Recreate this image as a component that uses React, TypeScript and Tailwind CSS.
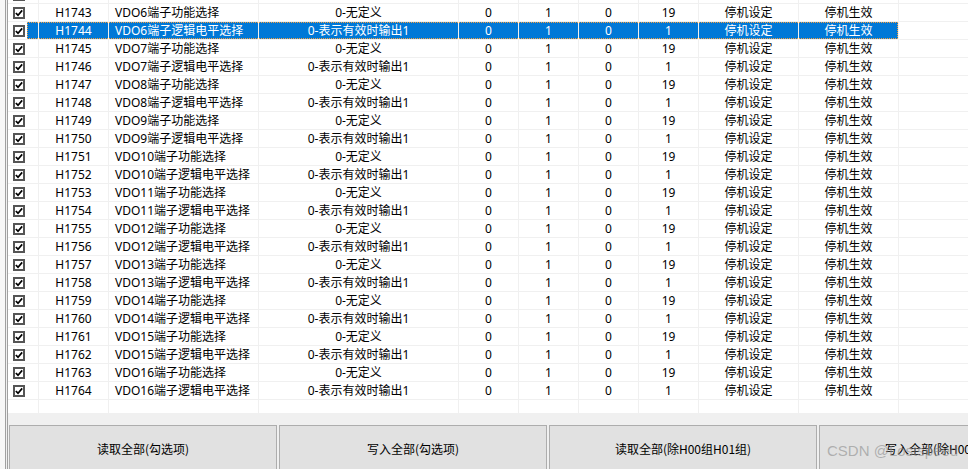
import { Fragment } from "react";

type Row = {
  code: string;
  name: string;
  value: string;
  max: string;
};

function buildRows(): Row[] {
  const rows: Row[] = [];
  for (let n = 1742; n <= 1764; n++) {
    const vdo = Math.floor((n - 1743) / 2) + 6;
    const isFunc = n % 2 === 1;
    rows.push({
      code: `H${n}`,
      name: `VDO${n === 1742 ? 5 : vdo}端子${isFunc ? "功能选择" : "逻辑电平选择"}`,
      value: isFunc ? "0-无定义" : "0-表示有效时输出1",
      max: isFunc ? "19" : "1",
    });
  }
  return rows;
}

const rows = buildRows();
const SELECTED = "H1744";

const widths = [70, 150, 200, 60, 60, 60, 60, 100, 100];

function CheckBox() {
  return (
    <div className="w-[12px] h-[12px] border-2 border-[#555555] bg-white flex items-center justify-center shrink-0">
      <svg width="8" height="8" viewBox="0 0 8 8">
        <path d="M0.8 4 L3 6.2 L7.2 1.4" stroke="#000" strokeWidth="1.7" fill="none" />
      </svg>
    </div>
  );
}

function ListRow({ row }: { row: Row }) {
  const sel = row.code === SELECTED;
  const cells = [row.code, row.name, row.value, "0", "1", "0", row.max, "停机设定", "停机生效"];
  const cellBg = sel ? "bg-[#0078d7] text-white" : "text-black";
  return (
    <div className="relative flex h-[18px] border-b border-[#f0f0f0]">
      <div className="w-[31px] shrink-0 flex items-center pl-[5px] border-r border-[#f0f0f0]">
        <CheckBox />
        <div className={`ml-[2px] flex-1 h-full ${sel ? "bg-[#0078d7]" : ""}`} />
      </div>
      {cells.map((c, i) => (
        <div
          key={i}
          style={{ width: widths[i] }}
          className={`shrink-0 h-full border-r border-[#f0f0f0] leading-[17px] whitespace-nowrap overflow-hidden ${cellBg} ${
            i === 1 ? "pl-[6px] text-left" : "text-center"
          }`}
        >
          {c}
        </div>
      ))}
      <div className="flex-1" />
      {sel && (
        <div className="absolute left-[19px] top-0 w-[871px] h-[17px] border border-dotted border-[#f5a040] pointer-events-none" />
      )}
    </div>
  );
}

function EmptyRow() {
  return (
    <div className="flex h-[18px]">
      <div className="w-[31px] shrink-0 border-r border-[#f0f0f0]" />
      {widths.map((w, i) => (
        <div key={i} style={{ width: w }} className="shrink-0 border-r border-[#f0f0f0]" />
      ))}
    </div>
  );
}

const buttons = [
  "读取全部(勾选项)",
  "写入全部(勾选项)",
  "读取全部(除H00组H01组)",
  "写入全部(除H00组H01组)",
];

export default function App() {
  return (
    <div
      className="relative w-[968px] h-[469px] overflow-hidden flex bg-white text-[12px] antialiased [transform:translateZ(0)]"
      style={{ fontFamily: '"Noto Sans", "Noto Sans CJK SC", sans-serif' }}
    >
      <div className="w-[5px] shrink-0 bg-[#f7f7f7]" />
      <div className="w-[1px] shrink-0 bg-[#a0a0a0]" />
      <div className="w-[1px] shrink-0 bg-[#f0f0f0]" />
      <div className="w-[1px] shrink-0 bg-[#a0a0a0]" />
      <div className="flex-1 flex flex-col min-w-0">
        <div className="h-[413px] shrink-0 overflow-hidden bg-white">
          <div className="-mt-[14px]">
            {rows.map((r) => (
              <Fragment key={r.code}>
                <ListRow row={r} />
              </Fragment>
            ))}
            <EmptyRow />
          </div>
        </div>
        <div className="flex-1 bg-[#f0f0f0] pt-[12px] pl-[1px] flex gap-[2px]">
          {buttons.map((b) => (
            <div
              key={b}
              className="w-[268px] h-[48px] shrink-0 bg-[#e1e1e1] border border-[#adadad] flex items-center justify-center text-black whitespace-nowrap"
              style={{ fontFamily: '"Noto Sans CJK SC", sans-serif' }}
            >
              {b}
            </div>
          ))}
        </div>
      </div>
      <div
        className="absolute left-[827px] top-[440px] text-[15px] text-[#8c8c8c]/60 whitespace-nowrap"
        style={{ fontFamily: '"Liberation Sans", sans-serif' }}
      >
        CSDN @Lostspeed
      </div>
    </div>
  );
}
